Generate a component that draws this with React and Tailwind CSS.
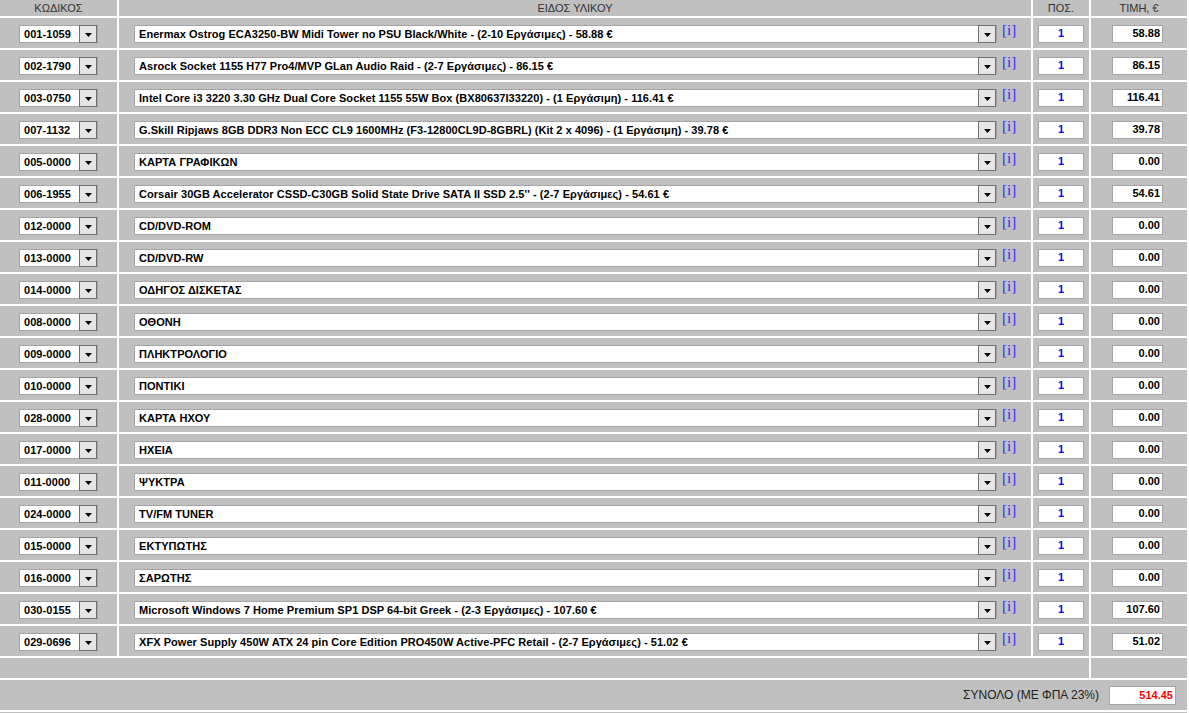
import React from "react";

const rows = [
  ["001-1059", "Enermax Ostrog ECA3250-BW Midi Tower no PSU Black/White - (2-10 Εργάσιμες) - 58.88 €", "58.88"],
  ["002-1790", "Asrock Socket 1155 H77 Pro4/MVP GLan Audio Raid - (2-7 Εργάσιμες) - 86.15 €", "86.15"],
  ["003-0750", "Intel Core i3 3220 3.30 GHz Dual Core Socket 1155 55W Box (BX80637I33220) - (1 Εργάσιμη) - 116.41 €", "116.41"],
  ["007-1132", "G.Skill Ripjaws 8GB DDR3 Non ECC CL9 1600MHz (F3-12800CL9D-8GBRL) (Kit 2 x 4096) - (1 Εργάσιμη) - 39.78 €", "39.78"],
  ["005-0000", "ΚΑΡΤΑ ΓΡΑΦΙΚΩΝ", "0.00"],
  ["006-1955", "Corsair 30GB Accelerator CSSD-C30GB Solid State Drive SATA II SSD 2.5'' - (2-7 Εργάσιμες) - 54.61 €", "54.61"],
  ["012-0000", "CD/DVD-ROM", "0.00"],
  ["013-0000", "CD/DVD-RW", "0.00"],
  ["014-0000", "ΟΔΗΓΟΣ ΔΙΣΚΕΤΑΣ", "0.00"],
  ["008-0000", "ΟΘΟΝΗ", "0.00"],
  ["009-0000", "ΠΛΗΚΤΡΟΛΟΓΙΟ", "0.00"],
  ["010-0000", "ΠΟΝΤΙΚΙ", "0.00"],
  ["028-0000", "ΚΑΡΤΑ ΗΧΟΥ", "0.00"],
  ["017-0000", "ΗΧΕΙΑ", "0.00"],
  ["011-0000", "ΨΥΚΤΡΑ", "0.00"],
  ["024-0000", "TV/FM TUNER", "0.00"],
  ["015-0000", "ΕΚΤΥΠΩΤΗΣ", "0.00"],
  ["016-0000", "ΣΑΡΩΤΗΣ", "0.00"],
  ["030-0155", "Microsoft Windows 7 Home Premium SP1 DSP 64-bit Greek - (2-3 Εργάσιμες) - 107.60 €", "107.60"],
  ["029-0696", "XFX Power Supply 450W ATX 24 pin Core Edition PRO450W Active-PFC Retail - (2-7 Εργάσιμες) - 51.02 €", "51.02"],
];

function DropBtn() {
  return (
    <div className="flex h-[18px] w-[18px] shrink-0 items-center justify-center border border-[#707070] bg-[#e6e6e6]">
      <svg width="7" height="4" viewBox="0 0 7 4" className="mt-[3px]">
        <polygon points="0,0 7,0 3.5,4" fill="#000" />
      </svg>
    </div>
  );
}

function Select({ width, text }) {
  return (
    <div
      className="flex h-[18px] items-center border border-[#a5a5a5] bg-white"
      style={{ width }}
    >
      <div className="flex-1 overflow-hidden whitespace-nowrap pl-[4px] text-[11px] font-bold leading-[16px] tracking-[0.05px] text-black">
        {text}
      </div>
      <DropBtn />
    </div>
  );
}

export default function App() {
  return (
    <div
      className="flex w-[1189px] flex-col gap-[2px] bg-white pr-[2px]"
      style={{ fontFamily: '"Liberation Sans", Arial, sans-serif' }}
    >
      <div className="flex h-[16px] gap-[2px] text-[11px] leading-[16px] text-[#333]">
        <div className="w-[117px] bg-[#c0c0c0] text-center">ΚΩΔΙΚΟΣ</div>
        <div className="w-[912px] bg-[#c0c0c0] text-center">ΕΙΔΟΣ ΥΛΙΚΟΥ</div>
        <div className="w-[56px] bg-[#c0c0c0] text-center">ΠΟΣ.</div>
        <div className="w-[96px] bg-[#c0c0c0] text-center">ΤΙΜΗ, €</div>
      </div>

      {rows.map(([code, desc, price]) => (
        <div key={code} className="flex h-[30px] gap-[2px]">
          <div className="flex w-[117px] items-center bg-[#c0c0c0] pl-[19px] pt-[1px]">
            <Select width={79} text={code} />
          </div>
          <div className="flex w-[912px] items-center bg-[#c0c0c0] pl-[15px] pt-[1px]">
            <Select width={863} text={desc} />
            <span
              className="ml-[5px] -mt-[6px] text-[15px] leading-[15px] text-[#2d2dff]"
              style={{ fontFamily: '"Liberation Serif", "Times New Roman", serif' }}
            >
              [i]
            </span>
          </div>
          <div className="flex w-[56px] items-center justify-center bg-[#c0c0c0] pt-[1px]">
            <div className="flex h-[18px] w-[46px] items-center justify-center border border-[#a5a5a5] bg-white text-[11px] font-bold text-[#0000ff]">
              1
            </div>
          </div>
          <div className="flex w-[96px] items-center bg-[#c0c0c0] pl-[21px] pt-[1px]">
            <div className="flex h-[18px] w-[51px] items-center justify-end border border-[#a5a5a5] bg-white pr-[2px] text-[11px] font-bold text-black">
              {price}
            </div>
          </div>
        </div>
      ))}

      <div className="flex h-[20px] gap-[2px]">
        <div className="w-[1089px] bg-[#c0c0c0]" />
        <div className="w-[96px] bg-[#c0c0c0]" />
      </div>

      <div className="flex h-[30px] w-[1187px] items-center justify-end gap-[10px] bg-[#c0c0c0] pr-[11px]">
        <span className="text-[12px] text-[#222]">ΣΥΝΟΛΟ (ΜΕ ΦΠΑ 23%)</span>
        <div className="flex h-[19px] w-[67px] items-center justify-end border border-[#a5a5a5] bg-white pr-[2px] text-[11px] font-bold text-[#ff0000]">
          514.45
        </div>
      </div>
      <div className="h-[1px] w-[1187px] bg-[#c0c0c0]" />
    </div>
  );
}
